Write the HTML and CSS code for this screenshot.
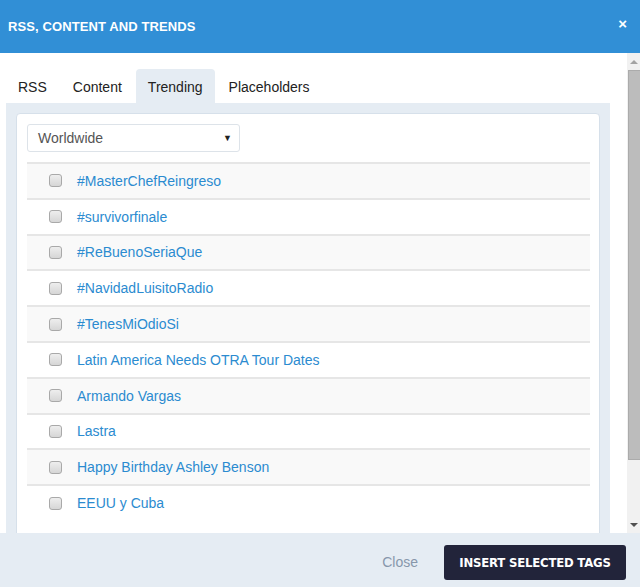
FILE: index.html
```html
<!DOCTYPE html>
<html>
  <head>
    <link rel="stylesheet" href="styles.css">
  </head>
  <body>
    <div class="modal">
      <div class="modal-header">
        <h1>RSS, Content and Trends</h1>
        <span class="modal-close">&times;</span>
      </div>

      <div class="modal-main">
        <div class="modal-body">
          <ul class="tabs">
            <li>RSS</li>
            <li>Content</li>
            <li class="active">Trending</li>
            <li>Placeholders</li>
          </ul>

          <div class="tab-panel">
            <div class="card">
              <div class="select">
                <span>Worldwide</span>
                <span class="select-arrow">&#9660;</span>
              </div>

              <ul class="trend-list">
                <li><input type="checkbox"><a href="#">#MasterChefReingreso</a></li>
                <li><input type="checkbox"><a href="#">#survivorfinale</a></li>
                <li><input type="checkbox"><a href="#">#ReBuenoSeriaQue</a></li>
                <li><input type="checkbox"><a href="#">#NavidadLuisitoRadio</a></li>
                <li><input type="checkbox"><a href="#">#TenesMiOdioSi</a></li>
                <li><input type="checkbox"><a href="#">Latin America Needs OTRA Tour Dates</a></li>
                <li><input type="checkbox"><a href="#">Armando Vargas</a></li>
                <li><input type="checkbox"><a href="#">Lastra</a></li>
                <li><input type="checkbox"><a href="#">Happy Birthday Ashley Benson</a></li>
                <li><input type="checkbox"><a href="#">EEUU y Cuba</a></li>
              </ul>
            </div>
          </div>
        </div>

        <!-- scrollbar as drawn by the browser -->
        <div class="scrollbar">
          <div class="scroll-btn up"></div>
          <div class="scroll-track">
            <div class="scroll-thumb"></div>
          </div>
          <div class="scroll-btn down"></div>
        </div>
      </div>

      <div class="modal-footer">
        <a href="#" class="btn-close">Close</a>
        <button>Insert selected tags</button>
      </div>
    </div>
  </body>
</html>
```

FILE: styles.css
```css
html, body {
  margin: 0;
  padding: 0;
}
body {
  font-family: "Liberation Sans", Arial, sans-serif;
  font-size: 14px;
  background: #fff;
}
.modal {
  display: flex;
  flex-direction: column;
  height: 587px;
}
.modal-header {
  height: 53px;
  background: #318fd6;
  color: #fff;
  display: flex;
  align-items: center;
  justify-content: space-between;
  padding: 0 13px 0 8px;
  flex-shrink: 0;
}
.modal-header h1 {
  margin: 0;
  font-size: 13px;
  font-weight: bold;
  letter-spacing: 0.1px;
  text-transform: uppercase;
}
.modal-close {
  font-size: 15px;
  font-weight: bold;
  line-height: 1;
  margin-top: -6px;
}
.modal-main {
  flex: 1;
  display: flex;
  min-height: 0;
}
.modal-body {
  flex: 1;
  overflow: hidden;
  padding: 16px 17px 0 6px;
}

.scrollbar {
  width: 13px;
  display: flex;
  flex-direction: column;
  background: #f1f1f1;
}
.scroll-btn {
  height: 17px;
  display: flex;
  align-items: center;
  justify-content: center;
}
.scroll-btn::before {
  content: "";
  border: 4px solid transparent;
}
.scroll-btn.up::before {
  border-top: none;
  border-bottom-color: #a3a3a3;
}
.scroll-btn.down::before {
  border-bottom: none;
  border-top-color: #505050;
}
.scroll-track {
  flex: 1;
  padding-left: 1px;
}
.scroll-thumb {
  height: 390px;
  background: #bcbcbc;
  border: 1px solid #ababab;
  border-right: none;
  box-sizing: border-box;
}

.tabs {
  list-style: none;
  margin: 0;
  padding: 0;
  display: flex;
}
.tabs li {
  height: 34px;
  line-height: 36px;
  padding: 0 12px;
  margin-right: 2px;
  color: #222;
  border-radius: 4px 4px 0 0;
}
.tabs li.active {
  background: #e5ecf3;
}
.tab-panel {
  background: #e5ecf3;
  padding: 10px 10px 10px;
}
.card {
  background: #fff;
  border: 1px solid #d6e0ea;
  border-radius: 4px;
  padding: 10px 9px 40px 10px;
}
.select {
  width: 194px;
  height: 26px;
  border: 1px solid #dde3e9;
  border-radius: 3px;
  display: flex;
  align-items: center;
  justify-content: space-between;
  padding: 0 7px 0 10px;
  color: #555;
  margin-bottom: 10px;
}
.select-arrow {
  font-size: 9px;
  color: #222;
}
.trend-list {
  list-style: none;
  margin: 0;
  padding: 0;
}
.trend-list li {
  height: 33.8px;
  border-top: 2px solid #e6e6e6;
  display: flex;
  align-items: center;
  padding-left: 22px;
}
.trend-list li:nth-child(odd) {
  background: #f9f9f9;
}
.trend-list input {
  appearance: none;
  margin: 0 15px 0 0;
  width: 13px;
  height: 13px;
  border: 1px solid #a9a9a9;
  border-radius: 3px;
  background: linear-gradient(#eeeeee, #d6d6d6);
}
.trend-list a {
  color: #2b8bd0;
  text-decoration: none;
}
.modal-footer {
  height: 54px;
  background: #e5ecf3;
  display: flex;
  align-items: center;
  justify-content: flex-end;
  padding: 0 14px 0 0;
  flex-shrink: 0;
}
.btn-close {
  color: #8797ab;
  text-decoration: none;
  margin-right: 26px;
  margin-top: 4px;
}
button {
  width: 182px;
  height: 35px;
  margin-top: 4px;
  background: #22243a;
  color: #fff;
  border: none;
  border-radius: 3px;
  font-family: "DejaVu Sans Condensed", "DejaVu Sans", sans-serif;
  font-stretch: condensed;
  font-weight: bold;
  font-size: 13px;
  letter-spacing: -0.2px;
  text-transform: uppercase;
  cursor: pointer;
}
```
